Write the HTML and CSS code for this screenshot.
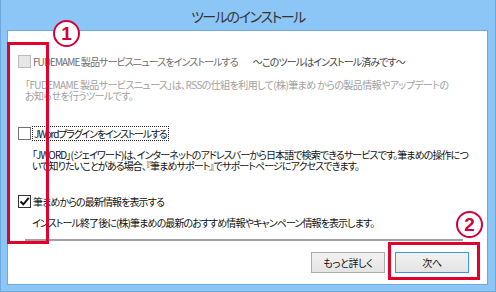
FILE: index.html
```html
<!DOCTYPE html>
<html lang="ja">
<head>
    <meta charset="UTF-8">
    <title>ツールのインストール</title>
    <link rel="stylesheet" href="styles.css">
</head>
<body>
    <div class="window">
        <div class="titlebar">ツールのインストール</div>

        <div class="panel">
            <div class="option option-installed">
                <div class="check-row">
                    <span class="box box-disabled"></span>
                    <span class="label label-disabled">FUDEMAME 製品サービスニュースをインストールする</span>
                    <span class="note">～このツールはインストール済みです～</span>
                </div>
                <p class="desc desc-muted">「FUDEMAME 製品サービスニュース」は、RSSの仕組を利用して(株)筆まめ からの製品情報やアップデートのお知らせを行うツールです。</p>
            </div>

            <div class="option option-jword">
                <div class="check-row">
                    <span class="box"></span>
                    <span class="label label-focus">JWordプラグインをインストールする</span>
                </div>
                <p class="desc desc-wide">「JWORD」(ジェイワード)は、インターネットのアドレスバーから日本語で検索できるサービスです。筆まめの操作について知りたいことがある場合、『筆まめサポート』でサポートページにアクセスできます。</p>
            </div>

            <div class="option option-news">
                <div class="check-row">
                    <span class="box box-checked">
                        <svg width="11" height="11" viewBox="0 0 11 11"><path d="M1.5 5.5 L4.3 8.3 L9.8 1.8" fill="none" stroke="#111" stroke-width="2"/></svg>
                    </span>
                    <span class="label">筆まめからの最新情報を表示する</span>
                </div>
                <p class="desc">インストール終了後に(株)筆まめの最新のおすすめ情報やキャンペーン情報を表示します。</p>
            </div>

            <div class="separator"></div>

            <div class="buttons">
                <button class="btn">もっと詳しく</button>
                <button class="btn btn-default">次へ</button>
            </div>
        </div>

        <!-- 注釈 -->
        <div class="callout callout-checks"></div>
        <div class="callout callout-next"></div>
        <span class="badge badge-one">1</span>
        <span class="badge badge-two">2</span>
    </div>
</body>
</html>
```

FILE: styles.css
```css
body {
    margin: 0;
    font-family: "Noto Sans CJK JP", "Noto Sans", sans-serif;
    background-color: #ffffff;
}
.window {
    position: relative;
    width: 494px;
    height: 291px;
    background-color: #8cc6f6;
    border: 1px solid #6ea8dc;
    border-top: none;
    display: flex;
    flex-direction: column;
}
.titlebar {
    height: 30px;
    line-height: 32px;
    text-align: center;
    font-size: 14px;
    letter-spacing: -1.4px;
    color: #333;
    font-feature-settings: "palt" 1;
}
.panel {
    margin-left: 6px;
    width: 479px;
    height: 253px;
    background-color: #fff;
    border: 1px solid #6ea8dc;
    display: flex;
    flex-direction: column;
    font-size: 10px;
    font-feature-settings: "palt" 1;
}
.option {
    display: flex;
    flex-direction: column;
}
.option-installed {
    margin-top: 24px;
}
.option-jword {
    margin-top: 26px;
}
.option-news {
    margin-top: 24px;
}
.check-row {
    display: flex;
    align-items: center;
    height: 13px;
    padding-left: 10px;
}
.box {
    width: 11px;
    height: 11px;
    border: 1px solid #707070;
    background-color: #fff;
    display: flex;
    align-items: center;
    justify-content: center;
}
.box-disabled {
    background-color: #e6e6e6;
    border-color: #bcbcbc;
}
.box-checked {
    border-color: #333;
}
.label {
    margin-left: 2px;
    color: #111;
    line-height: 13px;
    letter-spacing: -0.9px;
    white-space: nowrap;
}
.label-disabled {
    color: #6d6d6d;
}
.label-focus {
    outline: 1px dotted #222;
    padding: 0 1px;
    letter-spacing: -1.2px;
}
.note {
    margin-left: 15px;
    color: #444;
    letter-spacing: -0.9px;
    white-space: nowrap;
}
.desc {
    margin: 9px 0 0 24px;
    width: 434px;
    line-height: 11px;
    letter-spacing: -0.9px;
    color: #111;
}
.desc-wide {
    width: 443px;
}
.desc-muted {
    margin: 11px 0 0 17px;
    width: 432px;
    letter-spacing: -0.6px;
    color: #a0a0a0;
}
.separator {
    margin: 11px 0 0 17px;
    width: 438px;
    height: 2px;
    background-color: #a0a0a0;
}
.buttons {
    margin-top: 11px;
    display: flex;
    justify-content: flex-end;
    gap: 10px;
    padding-right: 18px;
}
.btn {
    width: 74px;
    height: 21px;
    padding: 0;
    font-family: inherit;
    font-size: 10px;
    letter-spacing: -0.4px;
    font-feature-settings: "palt" 1;
    color: #111;
    background: linear-gradient(#f2f2f2, #e4e4e4);
    border: 1px solid #acacac;
}
.btn-default {
    border-color: #3c95e6;
}
.callout {
    position: absolute;
    border: 3px solid #e2002c;
}
.callout-checks {
    left: 6px;
    top: 42px;
    width: 36px;
    height: 196px;
}
.callout-next {
    left: 387px;
    top: 242px;
    width: 86px;
    height: 32px;
}
.badge {
    position: absolute;
    width: 23px;
    height: 23px;
    border: 2px solid #d3003c;
    border-radius: 50%;
    background-color: #fff;
    color: #d3003c;
    font-family: "Liberation Sans", sans-serif;
    font-weight: bold;
    font-size: 19px;
    line-height: 23px;
    text-align: center;
}
.badge-one {
    left: 52px;
    top: 20px;
}
.badge-two {
    left: 455px;
    top: 211px;
}
```
